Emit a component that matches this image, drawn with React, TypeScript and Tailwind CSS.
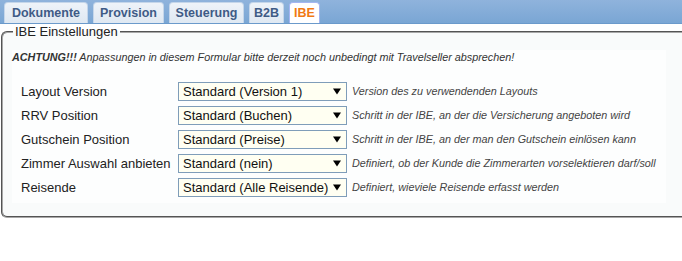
import React from "react";

const tabs = [
  { t: "Dokumente", w: "w-[84px]" },
  { t: "Provision", w: "w-[71px]" },
  { t: "Steuerung", w: "w-[75px]" },
  { t: "B2B", w: "w-[35px]" },
  { t: "IBE", w: "w-[31px]" },
];

const rows = [
  { label: "Layout Version", value: "Standard (Version 1)", desc: "Version des zu verwendenden Layouts" },
  { label: "RRV Position", value: "Standard (Buchen)", desc: "Schritt in der IBE, an der die Versicherung angeboten wird" },
  { label: "Gutschein Position", value: "Standard (Preise)", desc: "Schritt in der IBE, an der man den Gutschein einlösen kann" },
  { label: "Zimmer Auswahl anbieten", value: "Standard (nein)", desc: "Definiert, ob der Kunde die Zimmerarten vorselektieren darf/soll" },
  { label: "Reisende", value: "Standard (Alle Reisende)", desc: "Definiert, wieviele Reisende erfasst werden" },
];

function Select({ value }: { value: string }) {
  return (
    <div className="w-[169px] h-[19px] border border-[#7f9db9] bg-[#fffff2] flex items-center pl-[4px] pr-[4px] text-[13px] leading-[17px] text-[#111]">
      <span className="flex-1 whitespace-nowrap overflow-hidden">{value}</span>
      <svg width="8" height="7" viewBox="0 0 8 7" className="ml-[2px] mr-[1px]">
        <path d="M0 0.5 H8 L4 6.5 Z" fill="#000" />
      </svg>
    </div>
  );
}

export default function App() {
  return (
    <div
      className="w-[682px] h-[261px] bg-white overflow-hidden text-[#222]"
      style={{ fontFamily: '"Liberation Sans", Arial, sans-serif' }}
    >
      <div className="h-[24px] bg-[linear-gradient(#8fb3dc,#7aa6d4)] border-b border-[#6b9acb] flex items-end pl-[4px] gap-[5px]">
        {tabs.map(({ t, w }) => {
          const active = t === "IBE";
          return (
            <div
              key={t}
              className={
                active
                  ? `${w} h-[21px] text-center rounded-t-[4px] border border-b-0 border-[#a4b6f2] bg-white text-[#f07a14] font-bold text-[12.5px] leading-[20px] whitespace-nowrap`
                  : `${w} h-[21px] text-center rounded-t-[4px] border border-b-0 border-[#c5d6ea] bg-[linear-gradient(#eef3f9,#dfe8f2)] text-[#3f5b86] font-bold text-[12.5px] leading-[20px] whitespace-nowrap`
              }
            >
              {t}
            </div>
          );
        })}
      </div>
      <fieldset className="ml-[1px] mr-[-6px] border-2 border-[#a8a8a8] [border-style:groove] rounded-[6px] bg-[#f9fbfb] px-[10px] pb-[13px] pt-0">
        <legend className="px-[2px] text-[13px] leading-[15px] text-[#222]">IBE Einstellungen</legend>
        <div className="mr-[10px] bg-[#fdfefe] -mx-[1px]">
          <div className="mt-[11px] h-[14px] leading-[14px] text-[10.8px] italic text-[#333] whitespace-nowrap">
            <span className="font-bold">ACHTUNG!!!</span> Anpassungen in diesem Formular bitte derzeit noch unbedingt mit Travelseller absprechen!
          </div>
          <div className="mt-[18px] flex flex-col gap-[5px] pb-[6px]">
            {rows.map((r) => (
              <div key={r.label} className="h-[19px] flex items-center">
                <div className="w-[166px] pl-[9px] text-[13px] leading-[19px] whitespace-nowrap text-[#222]">{r.label}</div>
                <Select value={r.value} />
                <div className="pl-[5px] text-[10.8px] italic text-[#444] whitespace-nowrap">{r.desc}</div>
              </div>
            ))}
          </div>
        </div>
      </fieldset>
    </div>
  );
}
